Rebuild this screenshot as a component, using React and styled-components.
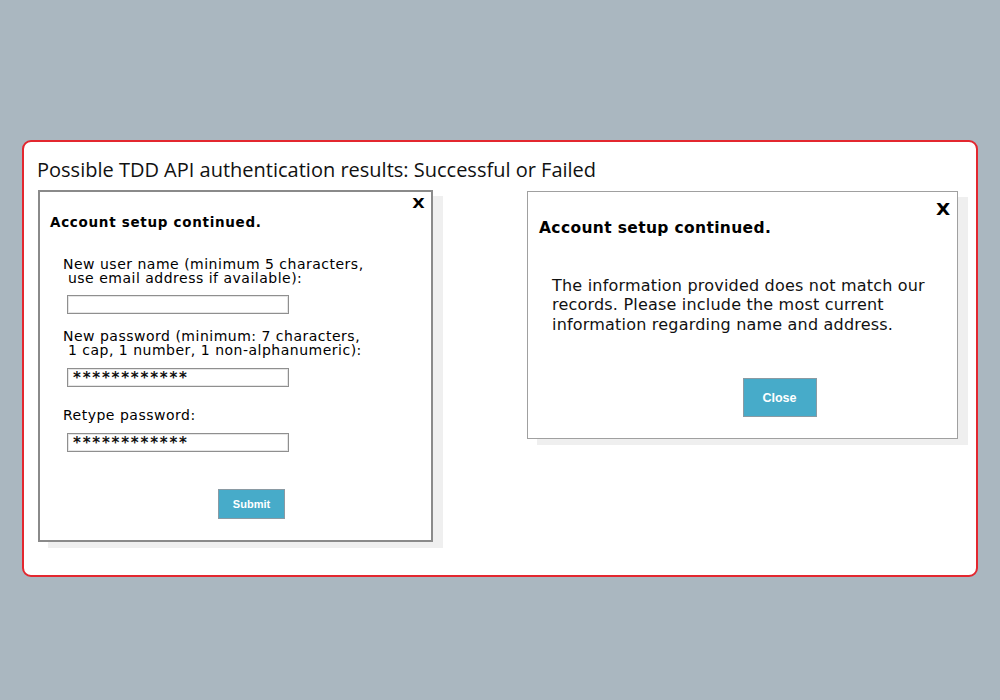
import React from "react";
import styled, { createGlobalStyle } from "styled-components";

const Global = createGlobalStyle`
  * { box-sizing: border-box; }
  body {
    margin: 0;
    background: #aab7c0;
    font-family: "DejaVu Sans", Verdana, sans-serif;
  }
`;

const Page = styled.div`
  width: 1000px;
  height: 700px;
  padding: 140px 22px 0 22px;
`;

const Frame = styled.div`
  height: 437px;
  background: #ffffff;
  border: 2px solid #e3272f;
  border-radius: 9px;
  padding: 15px 0 0 13px;
`;

const Title = styled.h1`
  margin: 0;
  font-family: "Open Sans", "Noto Sans", sans-serif;
  font-weight: 400;
  font-size: 20px;
  line-height: 26px;
  color: #111;
`;

const Row = styled.div`
  display: flex;
  align-items: flex-start;
  margin: 7px 0 0 1px;
`;

const Dialog = styled.div`
  width: ${(p) => p.$w}px;
  height: ${(p) => p.$h}px;
  margin-left: ${(p) => p.$ml || 0}px;
  margin-top: ${(p) => p.$mt || 0}px;
  background: #fff;
  border: ${(p) => p.$bw}px solid ${(p) => p.$bc};
  box-shadow: 10px 6px 0 #efefef;
  display: flex;
  flex-direction: column;
`;

const XRow = styled.div`
  display: flex;
  justify-content: flex-end;
  padding: ${(p) => p.$pt}px ${(p) => p.$pr}px 0 0;
  height: ${(p) => p.$h}px;
`;

const XMark = styled.span`
  font-family: "DejaVu Sans", sans-serif;
  font-weight: 900;
  font-size: ${(p) => p.$size}px;
  line-height: 1;
  color: #000;
  transform: scaleX(1.15);
`;

const Heading = styled.h2`
  margin: 0;
  padding-left: ${(p) => p.$pl}px;
  font-family: "DejaVu Sans", Verdana, sans-serif;
  font-weight: 700;
  font-size: ${(p) => p.$size}px;
  letter-spacing: ${(p) => p.$ls}px;
  line-height: 1.2;
  color: #000;
`;

const Form = styled.div`
  padding: 0 0 0 23px;
  display: flex;
  flex-direction: column;
`;

const Label = styled.div`
  font-size: 14px;
  line-height: 14px;
  letter-spacing: 0.5px;
  color: #000;
  white-space: pre;
  margin-top: ${(p) => p.$mt}px;
`;

const Field = styled.div`
  width: 222px;
  height: 19px;
  margin: ${(p) => p.$mt}px 0 0 4px;
  border: 1px solid #8f8f8f;
  box-shadow: inset 0 0 0 1px #e6e6e6;
  font-size: 15px;
  font-weight: 700;
  line-height: 19px;
  padding-left: 5px;
  letter-spacing: 1.8px;
  color: #111;
  overflow: hidden;
`;

const Button = styled.button`
  align-self: center;
  width: ${(p) => p.$w}px;
  height: ${(p) => p.$h}px;
  margin: ${(p) => p.$mt}px 0 0 ${(p) => p.$ml}px;
  background: #47abc9;
  border: 1px solid #8a9aa3;
  color: #fff;
  font-family: "Liberation Sans", Arial, sans-serif;
  font-weight: 700;
  font-size: ${(p) => p.$fs}px;
  padding: 0;
`;

const Message = styled.p`
  margin: 38px 0 0 24px;
  font-size: 16px;
  line-height: 19.5px;
  letter-spacing: 0.2px;
  color: #111;
`;

export default function App() {
  return (
    <>
      <Global />
      <Page>
        <Frame>
          <Title>Possible TDD API authentication results: Successful or Failed</Title>
          <Row>
            <Dialog $w={395} $h={352} $bw={2} $bc="#8a8a8a">
              <XRow $pt={4} $pr={7} $h={22}>
                <XMark $size={14}>X</XMark>
              </XRow>
              <Heading $pl={10} $size={13.5} $ls={0.7}>Account setup continued.</Heading>
              <Form>
                <Label $mt={27}>{"New user name (minimum 5 characters,\n use email address if available):"}</Label>
                <Field $mt={10} />
                <Label $mt={15}>{"New password (minimum: 7 characters,\n 1 cap, 1 number, 1 non-alphanumeric):"}</Label>
                <Field $mt={11}>************</Field>
                <Label $mt={21}>Retype password:</Label>
                <Field $mt={11}>************</Field>
                <Button $w={67} $h={30} $mt={37} $ml={9} $fs={11}>Submit</Button>
              </Form>
            </Dialog>
            <Dialog $w={431} $h={248} $ml={94} $mt={1} $bw={1} $bc="#a0a0a0">
              <XRow $pt={10} $pr={8} $h={27}>
                <XMark $size={16}>X</XMark>
              </XRow>
              <Heading $pl={11} $size={15.5} $ls={0.35}>Account setup continued.</Heading>
              <Message>
                The information provided does not match our
                <br />
                records. Please include the most current
                <br />
                information regarding name and address.
              </Message>
              <Button $w={74} $h={39} $mt={44} $ml={74} $fs={12.5}>Close</Button>
            </Dialog>
          </Row>
        </Frame>
      </Page>
    </>
  );
}
